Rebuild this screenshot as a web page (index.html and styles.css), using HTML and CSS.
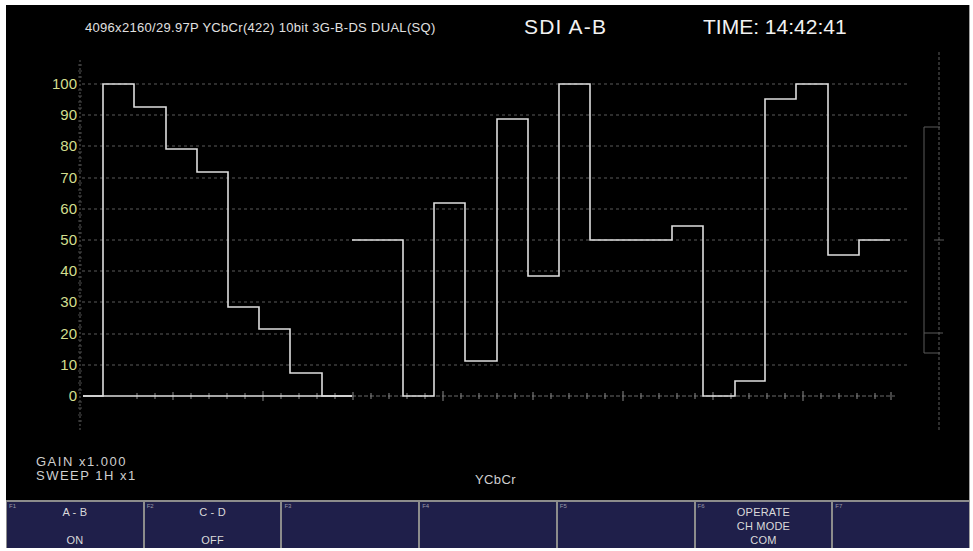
FILE: index.html
```html
<!DOCTYPE html>
<html lang="en">
<head>
<meta charset="utf-8">
<title>SDI A-B Waveform</title>
<link rel="stylesheet" href="styles.css">
</head>
<body>
<div class="screen">
  <header class="header">
    <div class="fmt">4096x2160/29.97P YCbCr(422) 10bit 3G-B-DS DUAL(SQ)</div>
    <div class="title">SDI A-B</div>
    <div class="time">TIME: 14:42:41</div>
  </header>

  <section class="graph">
    <div class="scale">
      <div class="lbl">100</div>
      <div class="lbl">90</div>
      <div class="lbl">80</div>
      <div class="lbl">70</div>
      <div class="lbl">60</div>
      <div class="lbl">50</div>
      <div class="lbl">40</div>
      <div class="lbl">30</div>
      <div class="lbl">20</div>
      <div class="lbl">10</div>
      <div class="lbl">0</div>
    </div>
    <svg class="plot" viewBox="78 49 891 396" width="891" height="396" xmlns="http://www.w3.org/2000/svg">
      <!-- vertical scale ticks -->
      <line class="axis" x1="80" y1="60" x2="80" y2="430"/>
      <g class="minor">
        <path d="M78 65H82M78 71H82M78 77H82M78 90H82M78 96H82M78 102H82M78 108H82M78 121H82M78 127H82M78 133H82M78 140H82M78 152H82M78 158H82M78 165H82M78 171H82M78 183H82M78 190H82M78 196H82M78 202H82M78 215H82M78 221H82M78 227H82M78 233H82M78 246H82M78 252H82M78 258H82M78 265H82M78 277H82M78 283H82M78 290H82M78 296H82M78 308H82M78 315H82M78 321H82M78 327H82M78 340H82M78 346H82M78 352H82M78 358H82M78 371H82M78 377H82M78 383H82M78 390H82M78 402H82M78 408H82M78 415H82M78 421H82"/>
      </g>
      <!-- grid -->
      <g class="grid">
        <line x1="82" y1="84" x2="908" y2="84"/>
        <line x1="82" y1="115" x2="908" y2="115"/>
        <line x1="82" y1="146" x2="908" y2="146"/>
        <line x1="82" y1="178" x2="908" y2="178"/>
        <line x1="82" y1="209" x2="908" y2="209"/>
        <line x1="82" y1="240" x2="908" y2="240"/>
        <line x1="82" y1="271" x2="908" y2="271"/>
        <line x1="82" y1="302" x2="908" y2="302"/>
        <line x1="82" y1="334" x2="908" y2="334"/>
        <line x1="82" y1="365" x2="908" y2="365"/>
      </g>
      <!-- baseline ticks -->
      <line class="base" x1="352" y1="396" x2="895" y2="396"/>
      <path class="ticks" d="M137 393V399M155 393V399M173 392V400M191 393V399M209 393V399M227 393V399M245 393V399M263 391V401M281 393V399M299 393V399M317 393V399M335 393V399M353 392V400M371 393V399M389 393V399M407 393V399M425 393V399M443 391V401M461 393V399M479 393V399M497 393V399M515 393V399M533 392V400M551 393V399M569 393V399M587 393V399M605 393V399M623 391V401M641 393V399M659 393V399M677 393V399M695 393V399M713 392V400M731 393V399M749 393V399M767 393V399M785 393V399M803 391V401M821 393V399M839 393V399M857 393V399M875 393V399M891 392V400"/>
      <!-- right side indicator -->
      <line class="side" x1="939" y1="52" x2="939" y2="430"/>
      <path class="bracket" d="M940 127H924V353H940M924 333H943M934 240H944"/>
      <!-- waveform -->
      <line class="wave" x1="83" y1="396" x2="352" y2="396"/>
      <path class="wave" d="M83 396H103V84H134V107H166V149H197V172H228V307H259V329H290V373H322V396H352"/>
      <path class="wave" d="M352 240H403V396H434V203H465V361H497V119H528V276H559V84H590V240H672V226H703V396H735V381H765V99H796V84H828V255H859V240H890"/>
    </svg>
  </section>

  <section class="info">
    <div class="params">
      <div>GAIN x1.000</div>
      <div>SWEEP 1H x1</div>
    </div>
    <div class="mode">YCbCr</div>
  </section>

  <nav class="keys">
    <div class="key"><span class="fn">F1</span><span class="ln">A - B</span><span class="ln"></span><span class="ln">ON</span></div>
    <div class="key"><span class="fn">F2</span><span class="ln">C - D</span><span class="ln"></span><span class="ln">OFF</span></div>
    <div class="key"><span class="fn">F3</span></div>
    <div class="key"><span class="fn">F4</span></div>
    <div class="key"><span class="fn">F5</span></div>
    <div class="key"><span class="fn">F6</span><span class="ln">OPERATE</span><span class="ln">CH MODE</span><span class="ln">COM</span></div>
    <div class="key"><span class="fn">F7</span></div>
  </nav>
</div>
</body>
</html>
```

FILE: styles.css
```css
* { box-sizing: border-box; }

html, body {
  margin: 0;
  padding: 0;
  background: #ffffff;
}

body {
  font-family: "Liberation Sans", Arial, sans-serif;
  color: #e6e6e6;
}

.screen {
  margin: 5px 0 0 6px;
  width: 964px;
  height: 543px;
  background: #000;
  display: flex;
  flex-direction: column;
  border-right: 1px solid #a0a0a0;
}

.header {
  height: 44px;
  flex: none;
  display: grid;
  grid-template-columns: 439px 179px auto;
  align-items: center;
  padding-left: 79px;
}

.fmt {
  font-size: 13px;
  letter-spacing: 0.3px;
  color: #e0e0e0;
  padding-top: 1px;
}

.title {
  font-size: 21px;
  letter-spacing: 1.2px;
  color: #f2f2f2;
}

.time {
  font-size: 21px;
  color: #f2f2f2;
}

.graph {
  height: 396px;
  flex: none;
  display: flex;
}

.scale {
  width: 72px;
  flex: none;
  padding-top: 19px;
  display: flex;
  flex-direction: column;
}

.lbl {
  height: 31.2px;
  line-height: 31.2px;
  text-align: right;
  font-size: 15px;
  color: #d2de8e;
  padding-right: 1px;
}

.plot {
  display: block;
  flex: none;
}

.axis {
  stroke: #5a5a5a;
  stroke-width: 1;
  stroke-dasharray: 2 2;
}

.minor path {
  stroke: #4a4a4a;
  stroke-width: 1;
  fill: none;
}

.grid line {
  stroke: #5a5a5a;
  stroke-width: 1;
  stroke-dasharray: 3 3;
}

.base {
  stroke: #6a6a6a;
  stroke-width: 1;
  stroke-dasharray: 4 2;
}

.ticks {
  stroke: #8a8a8a;
  stroke-width: 1;
  fill: none;
}

.side {
  stroke: #5c5c5c;
  stroke-width: 1;
  stroke-dasharray: 3 2;
}

.bracket {
  stroke: #5a5a5a;
  stroke-width: 1;
  fill: none;
}

.wave {
  stroke: #dedede;
  stroke-width: 1.6;
  fill: none;
  stroke-linejoin: miter;
}

.info {
  height: 55px;
  flex: none;
  display: grid;
  grid-template-columns: 469px auto;
  font-size: 13px;
  color: #cfcfcf;
}

.params {
  padding: 10px 0 0 30px;
  line-height: 14px;
  letter-spacing: 1.5px;
}

.mode {
  padding-top: 28px;
  line-height: 14px;
  letter-spacing: 0.4px;
}

.keys {
  flex: 1;
  display: grid;
  grid-template-columns: repeat(7, 1fr);
  border-top: 2px solid #8c8c8c;
  background: #8c8c8c;
  column-gap: 2px;
  padding-left: 1px;
}

.key {
  position: relative;
  background: #1f1f4a;
  display: flex;
  flex-direction: column;
  align-items: center;
  padding-top: 3px;
}

.fn {
  position: absolute;
  top: 1px;
  left: 2px;
  font-size: 6px;
  line-height: 6px;
  color: #9a9aa8;
}

.ln {
  height: 14px;
  line-height: 14px;
  font-size: 11px;
  color: #dadada;
  letter-spacing: 0.2px;
}
```
